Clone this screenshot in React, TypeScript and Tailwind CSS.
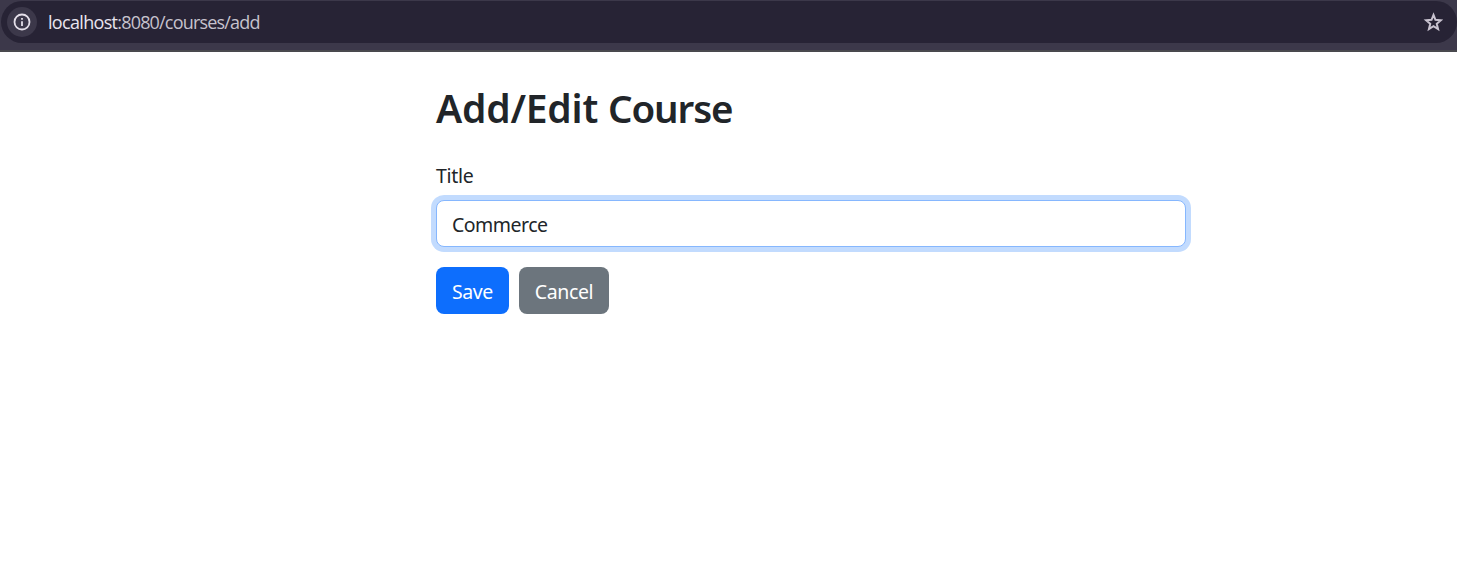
import { useState } from "react";

function AddressBar() {
  return (
    <header className="h-[52px] border-b-2 border-[#49494d] bg-[#3c384a] pt-px">
      <div className="ml-px flex h-[42px] items-center rounded-full bg-[#272335] pr-[14px] pl-[6px]">
        <span className="flex size-[30px] items-center justify-center rounded-full bg-[#3c384a]">
          <svg width="18" height="18" viewBox="0 0 18 18" fill="none" stroke="#e4dfe9" strokeWidth="1.8">
            <circle cx="9" cy="9" r="7.5" />
            <path d="M9 8.2V13M9 5v1.8" />
          </svg>
        </span>
        <span className="ml-[11px] flex-1 font-['Open_Sans','Noto_Sans',sans-serif] text-[18px] leading-6 tracking-[-0.82px] whitespace-nowrap text-[#c6c2cd]">
          <span className="tracking-[-0.68px] text-[#e9e5ef]">localhost</span>:8080/courses/add
        </span>
        <svg width="20" height="20" viewBox="0 0 20 20" fill="none" stroke="#c9c3d0" strokeWidth="2">
          <path d="M10.5 2.9l1.95 4.95 5.4.4-4.1 3.5 1.3 5.25-4.55-2.9L5.95 17l1.3-5.25-4.1-3.5 5.4-.4z" />
        </svg>
      </div>
    </header>
  );
}

export default function App() {
  const [title, setTitle] = useState("Commerce");
  return (
    <div className="min-h-screen bg-white font-['Noto_Sans',sans-serif] text-[19.5px] leading-[30px] text-[#212529]">
      <AddressBar />
      <main className="ml-[436px] w-[750px] pt-8">
        <h1 className="text-[39px] leading-[48px] font-semibold tracking-[-0.2px] whitespace-nowrap">
          Add/Edit <span className="text-[38.5px] tracking-[-1.1px]">Course</span>
        </h1>
        <form className="pt-[29px]" onSubmit={(e) => e.preventDefault()}>
          <label htmlFor="title" className="block tracking-[-0.3px]">Title</label>
          <input
            id="title"
            value={title}
            onChange={(e) => setTitle(e.target.value)}
            className="mt-[9px] block h-[47px] w-full rounded-[8px] border border-[#86b7fe] bg-white px-[15px] pt-px tracking-[-0.5px] shadow-[0_0_0_5px_#c2dbfe] outline-none"
          />
          <div className="mt-5 flex gap-[10px] text-white">
            <button type="submit" className="h-[47px] w-[73px] rounded-[8px] bg-[#0d6efd] pt-[2px] tracking-[-0.4px]">Save</button>
            <button type="button" className="h-[47px] w-[90px] rounded-[8px] bg-[#6c757d] pt-[2px] tracking-[-0.4px]">Cancel</button>
          </div>
        </form>
      </main>
    </div>
  );
}
